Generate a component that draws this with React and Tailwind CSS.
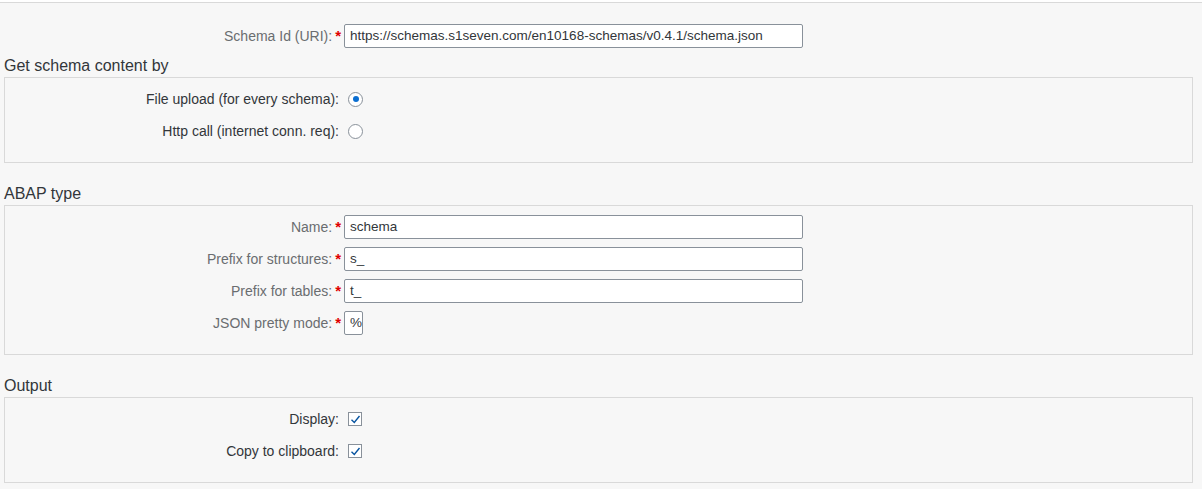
import React from 'react';

const font = { fontFamily: '"Liberation Sans", Arial, sans-serif' };

const Req = () => <span className="text-[#e00000] text-[15px] font-bold ml-[3px] leading-none -mt-[2px]">*</span>;

// label column ends at page x=341; inside boxes we're already offset by 5px
const InputRow = ({ label, value, inBox = true, width = 'w-[459px]' }) => (
  <div className="flex items-center h-8">
    <div className={`${inBox ? 'w-[336px]' : 'w-[341px]'} flex items-center justify-end text-[14px] text-[#6a6d70]`}>
      <span>{label}</span>
      <Req />
    </div>
    <div className={`ml-[3px] ${width} h-6 bg-white border border-[#89919a] rounded-[2px] flex items-center px-[5px] text-[13.5px] text-[#32363a]`}>
      {value}
    </div>
  </div>
);

const Radio = ({ checked }) => (
  <div className="w-[15px] h-[15px] rounded-full border border-[#89919a] bg-white flex items-center justify-center">
    {checked && <div className="w-[6px] h-[6px] rounded-full bg-[#0a6ed1]" />}
  </div>
);

const Check = () => (
  <div className="w-[14px] h-[14px] border border-[#89919a] bg-white flex items-center justify-center">
    <svg width="11" height="11" viewBox="0 0 11 11">
      <path d="M1.5 5.8 L4.3 8.5 L9.5 2" fill="none" stroke="#0854a0" strokeWidth="1.4" />
    </svg>
  </div>
);

const ChoiceRow = ({ label, children }) => (
  <div className="flex items-center h-8">
    <div className="w-[336px] text-right pr-[2px] text-[14px] text-[#32363a]">{label}</div>
    <div className="ml-[7px]">{children}</div>
  </div>
);

const Group = ({ title, children, first }) => (
  <div className={first ? 'mt-[3px]' : 'mt-5'}>
    <div className="h-[22px] flex items-center pl-1 text-[16px] text-[#32363a]">{title}</div>
    <div className="ml-1 mr-[9px] border border-[#d9d9d9] pt-[5px] pb-[15px]">{children}</div>
  </div>
);

export default function App() {
  return (
    <div className="min-h-screen bg-[#f7f7f7]" style={font}>
      <div className="h-[2px] bg-white" />
      <div className="border-t border-[#d9d9d9] pt-[17px]">
        <InputRow label="Schema Id (URI):" value="https://schemas.s1seven.com/en10168-schemas/v0.4.1/schema.json" inBox={false} />

        <Group title="Get schema content by" first>
          <ChoiceRow label="File upload (for every schema):"><Radio checked /></ChoiceRow>
          <ChoiceRow label="Http call (internet conn. req):"><Radio /></ChoiceRow>
        </Group>

        <Group title="ABAP type">
          <InputRow label="Name:" value="schema" />
          <InputRow label="Prefix for structures:" value="s_" />
          <InputRow label="Prefix for tables:" value="t_" />
          <InputRow label="JSON pretty mode:" value="%" width="w-[19px]" />
        </Group>

        <Group title="Output">
          <ChoiceRow label="Display:"><Check /></ChoiceRow>
          <ChoiceRow label="Copy to clipboard:"><Check /></ChoiceRow>
        </Group>
      </div>
    </div>
  );
}
